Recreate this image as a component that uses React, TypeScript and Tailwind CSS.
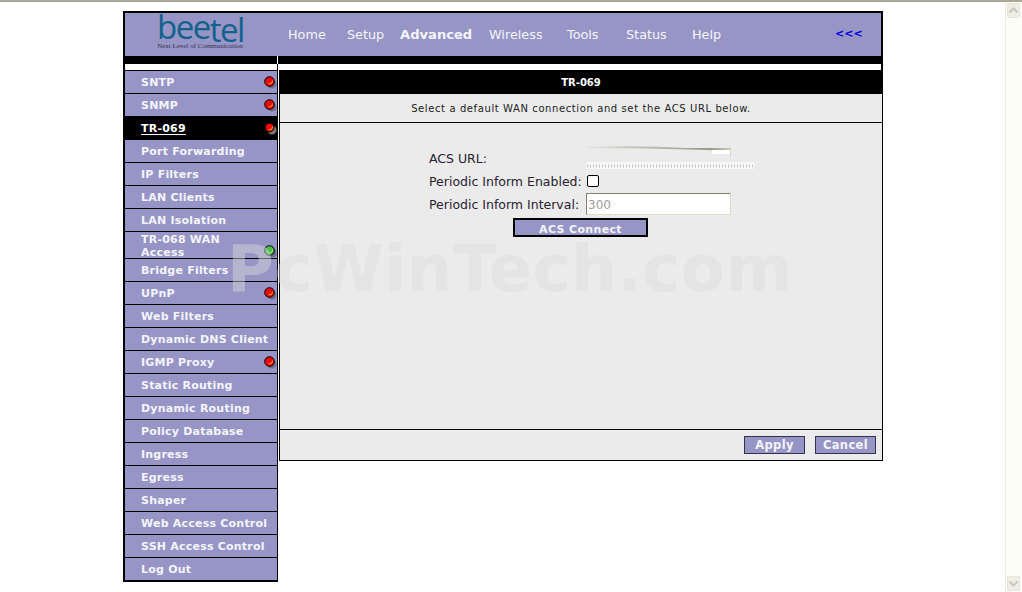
import React from 'react';

const navItems = [
  { label: 'Home', className: 'ml-[163px] w-[59px]' },
  { label: 'Setup', className: 'w-[53px]' },
  { label: 'Advanced', className: 'w-[89px] text-[13.1px] font-bold' },
  { label: 'Wireless', className: 'w-[78px]' },
  { label: 'Tools', className: 'w-[59px]' },
  { label: 'Status', className: 'w-[66px]' },
  { label: 'Help', className: 'w-[143px]' },
];

const menuItems: { label: string; led?: 'red' | 'green'; active?: boolean; tall?: boolean }[] = [
  { label: 'SNTP', led: 'red' },
  { label: 'SNMP', led: 'red' },
  { label: 'TR-069', led: 'red', active: true },
  { label: 'Port Forwarding' },
  { label: 'IP Filters' },
  { label: 'LAN Clients' },
  { label: 'LAN Isolation' },
  { label: 'TR-068 WAN Access', led: 'green', tall: true },
  { label: 'Bridge Filters' },
  { label: 'UPnP', led: 'red' },
  { label: 'Web Filters' },
  { label: 'Dynamic DNS Client' },
  { label: 'IGMP Proxy', led: 'red' },
  { label: 'Static Routing' },
  { label: 'Dynamic Routing' },
  { label: 'Policy Database' },
  { label: 'Ingress' },
  { label: 'Egress' },
  { label: 'Shaper' },
  { label: 'Web Access Control' },
  { label: 'SSH Access Control' },
  { label: 'Log Out' },
];

const Led = ({ color, active, tall }: { color: 'red' | 'green'; active?: boolean; tall?: boolean }) => {
  const fill = color === 'red' ? '#ee0a0a' : '#46c046';
  const glint = color === 'red' ? '#f7a21e' : '#8fe08f';
  return (
    <svg
      width="13"
      height="13"
      viewBox="0 0 13 13"
      className={`absolute right-[0px] ${tall ? 'bottom-[0px]' : 'top-[5px]'}`}
    >
      <circle cx="8" cy="8" r="4.5" fill={active ? '#777' : '#6f6e90'} />
      <circle cx="5.5" cy="5.5" r={active ? 4.4 : 4.8} fill={fill} stroke="#000" strokeWidth="1" />
      <path d="M4.5 8 L8 7 L8.5 4.5" fill="none" stroke={glint} strokeWidth="1" />
    </svg>
  );
};

const MenuRow = ({ label, led, active, tall }: (typeof menuItems)[number]) => (
  <div
    className={`relative flex items-center border-b border-black pl-4 pr-2 pt-[2px] font-bold text-[11px] tracking-[0.22px] ${
      tall ? 'h-[27px] leading-[13px]' : 'h-[23px] whitespace-nowrap'
    } ${active ? 'bg-black text-white' : 'bg-[#9795c5] text-[#f4f4fc]'}`}
  >
    <span className={`${active ? 'underline underline-offset-2' : ''} ${tall ? 'w-[110px]' : ''}`}>{label}</span>
    {led && <Led color={led} active={active} tall={tall} />}
  </div>
);

const Logo = () => (
  <div className="ml-[32px] w-[86px] shrink-0 self-start text-center">
    <div className="mt-[0px] whitespace-nowrap font-['Open_Sans',sans-serif] text-[33px] leading-[28px] tracking-[-1.5px] text-[#14618c]">
      bee<span className="relative top-[3px]">tel</span>
    </div>
    <div className="mt-[1px] whitespace-nowrap font-['Liberation_Serif',serif] text-[7px] leading-[8px] text-[#33335a]">
      Next Level of Communication
    </div>
  </div>
);

export default function App() {
  return (
    <div className="relative flex h-[592px] w-[1022px] flex-col overflow-hidden bg-white font-['DejaVu_Sans',sans-serif]">
      <div className="h-[2px] shrink-0 bg-[#aca899]" />
      <div className="flex min-h-0 flex-1">
        <div className="min-w-0 flex-1 pl-[123px] pt-[9px]">
          <div className="relative w-[760px]">
            {/* Header */}
            <div className="flex h-[45px] items-center border-x-2 border-t-2 border-black bg-[#9795c5] text-[12.8px] text-[#f4f4fc]">
              <Logo />
              <div className="-ml-[118px] flex items-center">
                {navItems.map((item) => (
                  <span key={item.label} className={`whitespace-nowrap ${item.className}`}>
                    {item.label}
                  </span>
                ))}
                <span className="text-[11px] font-bold text-[#0000e0]">&lt;&lt;&lt;</span>
              </div>
            </div>
            <div className="flex h-[8px]">
              <div className="w-[154px] bg-black" />
              <div className="w-px bg-white" />
              <div className="flex-1 bg-black" />
            </div>

            <div className="flex">
              {/* Sidebar */}
              <div className="w-[155px] shrink-0">
                <div className="h-[6px] border-x-2 border-r-0 border-black">
                  <div className="ml-[152px] h-full w-px bg-black" />
                </div>
                <div className="border-x-2 border-b border-black border-r-0 border-t border-t-black">
                  <div className="border-r border-black">
                    {menuItems.map((item) => (
                      <MenuRow key={item.label} {...item} />
                    ))}
                  </div>
                </div>
              </div>

              {/* Main panel */}
              <div className="ml-px flex-1">
                <div className="h-[6px] border-r-2 border-black" />
                <div className="flex h-[391px] flex-col border-x border-b border-black bg-[#ebebeb]">
                  <div className="flex h-[24px] items-center justify-center bg-black text-[10px] font-bold text-white">TR-069</div>
                  <div className="flex h-[29px] items-center justify-center border-b border-black text-[10px] tracking-[0.6px] text-[#222]">
                    Select a default WAN connection and set the ACS URL below.
                  </div>
                  <div className="flex-1 pl-[149px] pt-[23px] text-[12.5px] text-[#2a2233]">
                    <div className="flex h-[23px] items-center">
                      <span className="w-[157px] pt-[4px]">ACS URL:</span>
                      <svg width="170" height="24" viewBox="0 0 170 24" className="-mt-[1px]">
                        <defs>
                          <linearGradient id="urlSmear" x1="0" y1="0" x2="1" y2="0">
                            <stop offset="0" stopColor="#e2e2dc" />
                            <stop offset="0.85" stopColor="#9a9888" />
                            <stop offset="1" stopColor="#c8c6b8" />
                          </linearGradient>
                        </defs>
                        <path d="M1 2 Q50 0 100 3 L144 3 L144 6 L120 5 Q60 3 1 3 Z" fill="url(#urlSmear)" />
                        <rect x="126" y="5" width="18" height="4" fill="#ffffff" />
                        <rect x="144" y="2" width="1" height="10" fill="#d8d6c8" />
                        <rect x="0" y="17" width="168" height="7" fill="#f8f8f8" />
                        <path d="M1 21 H167" stroke="#c4c4bc" strokeWidth="3" strokeDasharray="1 2" />
                      </svg>
                    </div>
                    <div className="flex h-[23px] items-center">
                      <span className="w-[158px] pt-[3px]">Periodic Inform Enabled:</span>
                      <span className="mt-[1px] h-[12px] w-[12px] rounded-[2px] border border-black bg-white" />
                    </div>
                    <div className="flex h-[23px] items-center">
                      <span className="w-[157px] pt-[3px]">Periodic Inform Interval:</span>
                      <div className="flex h-[22px] w-[145px] items-center border border-[#dcdac8] border-l-[#85836f] border-t-[#85836f] bg-white pl-[1px] pt-[3px] text-[12px] text-[#a0a0a0]">
                        300
                      </div>
                    </div>
                    <div className="ml-[84px] mt-[3px] flex h-[19px] w-[135px] items-center justify-center overflow-hidden border-2 border-black bg-[#9795c5] pt-[3px] text-[11px] leading-[13px] font-bold tracking-[0.35px] text-[#f4f4fc]">
                      ACS Connect
                    </div>
                  </div>
                  <div className="flex h-[31px] items-center justify-end gap-[10px] border-t border-black pr-[6px] pb-[1px] text-[11.5px] font-bold tracking-[0.35px] text-[#f4f4fc]">
                    <div className="flex h-[18px] w-[61px] items-center justify-center border border-[#333350] bg-[#9795c5] pt-[2px]">Apply</div>
                    <div className="flex h-[18px] w-[61px] items-center justify-center border border-[#333350] bg-[#9795c5] pt-[2px]">Cancel</div>
                  </div>
                </div>
              </div>
            </div>

            {/* Watermark */}
            <div className="pointer-events-none absolute left-[104px] top-[218px] whitespace-nowrap text-[64px] font-bold leading-[80px] tracking-[0.6px] text-[#dbdbdb]/45">
              PcWinTech.com
            </div>
          </div>
        </div>

        {/* Scrollbar */}
        <div className="flex w-[17px] shrink-0 flex-col justify-between border-l border-[#ededE5] bg-[#fdfdf8] pb-[1px] pl-[1px] pr-[2px] pt-[1px]">
          <div className="flex h-[15px] items-center justify-center rounded-[2px] border border-[#e6e6dc] bg-[#eeeee6]">
            <svg width="11" height="7" viewBox="0 0 11 7"><path d="M1.5 5.5 L5.5 1.5 L9.5 5.5" fill="none" stroke="#c8c8bc" strokeWidth="2" /></svg>
          </div>
          <div className="flex h-[15px] items-center justify-center rounded-[2px] border border-[#e6e6dc] bg-[#eeeee6]">
            <svg width="11" height="7" viewBox="0 0 11 7"><path d="M1.5 1.5 L5.5 5.5 L9.5 1.5" fill="none" stroke="#c8c8bc" strokeWidth="2" /></svg>
          </div>
        </div>
      </div>
    </div>
  );
}
